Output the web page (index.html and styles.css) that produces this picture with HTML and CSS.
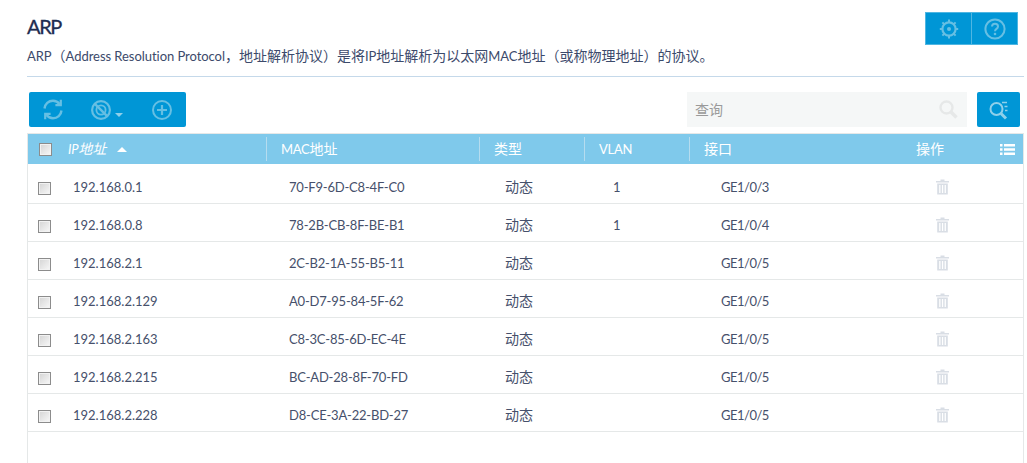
FILE: index.html
```html
<!DOCTYPE html>
<html lang="zh">
<head>
<meta charset="utf-8">
<title>ARP</title>
<link rel="stylesheet" href="styles.css">
</head>
<body>
<div class="page">
  <header class="head">
    <div class="head-text">
      <h1 class="title">ARP</h1>
      <p class="desc"><span class="en">ARP</span>（<span class="en">Address Resolution Protocol</span>，地址解析协议）是将<span class="en">IP</span>地址解析为以太网<span class="en">MAC</span>地址（或称物理地址）的协议。</p>
    </div>
    <div class="head-btns">
      <button class="hbtn" aria-label="设置">
        <svg class="ic" width="20" height="20" viewBox="0 0 20 20" fill="none" stroke="#66bfe3" stroke-width="2.200"><circle cx="10" cy="10" r="6.600"/><circle cx="10" cy="10" r="2" fill="#66bfe3" stroke="none"/><path d="M10 .5v2.600M10 16.900v2.600M.8 10h2.600M16.600 10h2.600M3.400 3.400l1.800 1.800M14.800 14.800l1.800 1.800M16.600 3.400l-1.800 1.800M5.200 14.800l-1.800 1.800" stroke-width="2"/></svg>
      </button>
      <button class="hbtn" aria-label="帮助">
        <svg class="ic" width="22" height="22" viewBox="0 0 22 22" fill="none" stroke="#66bfe3" stroke-width="2"><circle cx="11" cy="11" r="9.600"/><path d="M8 8.600c0-1.800 1.400-2.900 3-2.900s3 1 3 2.700c0 2.500-3 2.400-3 4.800"/><circle cx="11" cy="16" r="1.300" fill="#66bfe3" stroke="none"/></svg>
      </button>
    </div>
  </header>
  <div class="toolbar">
    <div class="actions">
      <svg class="ic" width="20" height="21" viewBox="0 0 20 21" fill="none" stroke="#66bfe3" stroke-width="2.400"><path d="M1.500 9.500C2 5 5.500 1.800 10 1.800c2.800 0 5 1.200 6.500 3.200M18.500 11.500c-.5 4.500-4 7.700-8.500 7.700-2.800 0-5-1.200-6.500-3.200"/><path d="M17.800 .8v5.400h-5.400M2.200 20.200v-5.400h5.400" stroke-width="2.200"/></svg>
      <span class="act-mid">
        <svg class="ic" width="20" height="20" viewBox="0 0 20 20" fill="none" stroke="#66bfe3" stroke-width="2.200"><circle cx="10" cy="10" r="8.900"/><circle cx="10" cy="10" r="4.600" stroke-width="1.800"/><path d="M3.600 3.600l12.800 12.800" stroke-width="2.400"/></svg>
        <i class="caret"></i>
      </span>
      <svg class="ic" width="20" height="20" viewBox="0 0 20 20" fill="none" stroke="#66bfe3" stroke-width="2"><circle cx="10" cy="10" r="9"/><path d="M10 5v10M5 10h10" stroke-width="2.200"/></svg>
    </div>
    <div class="search">
      <div class="search-box">
        <span class="ph">查询</span>
        <svg class="ic" width="19" height="19" viewBox="0 0 19 19" fill="none" stroke="#e6e8e8" stroke-width="2.400"><circle cx="7.500" cy="7.500" r="6"/><path d="M12 12l5.500 5.500" stroke-width="3.400"/></svg>
      </div>
      <button class="adv" aria-label="高级查询">
        <svg class="ic" width="20" height="20" viewBox="0 0 20 20" fill="none" stroke="#8fd0ea" stroke-width="2"><circle cx="7.500" cy="9" r="6"/><path d="M12 13.500l5 5" stroke-width="3"/><path d="M13 2.500h5M15.500 6.500h3M16 10.500h2.500" stroke-width="1.600"/></svg>
      </button>
    </div>
  </div>
  <section class="table">
    <div class="thead grid">
      <span class="cell-chk"><i class="chk"></i></span>
      <span class="th first"><span class="en">IP</span>地址<i class="sort"></i></span>
      <span class="th"><span class="en">MAC</span>地址</span>
      <span class="th">类型</span>
      <span class="th"><span class="en">VLAN</span></span>
      <span class="th">接口</span>
      <span class="th-op">操作</span>
      <span class="th-list">
        <svg width="15" height="11" viewBox="0 0 15 11" fill="#fff"><path d="M0 0h2.500v2.400H0zM4 0h11v2.400H4zM0 4.300h2.500v2.400H0zM4 4.300h11v2.400H4zM0 8.600h2.500V11H0zM4 8.600h11V11H4z"/></svg>
      </span>
    </div>
    <div class="tbody">
      <div class="row grid"><span class="cell-chk"><i class="chk"></i></span><span class="td">192.168.0.1</span><span class="td">70-F9-6D-C8-4F-C0</span><span class="td">动态</span><span class="td">1</span><span class="td">GE1/0/3</span><span class="op"><svg class="trash" width="13" height="16" viewBox="0 0 13 15"><use href="#t"/></svg></span></div>
      <div class="row grid"><span class="cell-chk"><i class="chk"></i></span><span class="td">192.168.0.8</span><span class="td">78-2B-CB-8F-BE-B1</span><span class="td">动态</span><span class="td">1</span><span class="td">GE1/0/4</span><span class="op"><svg class="trash" width="13" height="16" viewBox="0 0 13 15"><use href="#t"/></svg></span></div>
      <div class="row grid"><span class="cell-chk"><i class="chk"></i></span><span class="td">192.168.2.1</span><span class="td">2C-B2-1A-55-B5-11</span><span class="td">动态</span><span class="td"></span><span class="td">GE1/0/5</span><span class="op"><svg class="trash" width="13" height="16" viewBox="0 0 13 15"><use href="#t"/></svg></span></div>
      <div class="row grid"><span class="cell-chk"><i class="chk"></i></span><span class="td">192.168.2.129</span><span class="td">A0-D7-95-84-5F-62</span><span class="td">动态</span><span class="td"></span><span class="td">GE1/0/5</span><span class="op"><svg class="trash" width="13" height="16" viewBox="0 0 13 15"><use href="#t"/></svg></span></div>
      <div class="row grid"><span class="cell-chk"><i class="chk"></i></span><span class="td">192.168.2.163</span><span class="td">C8-3C-85-6D-EC-4E</span><span class="td">动态</span><span class="td"></span><span class="td">GE1/0/5</span><span class="op"><svg class="trash" width="13" height="16" viewBox="0 0 13 15"><use href="#t"/></svg></span></div>
      <div class="row grid"><span class="cell-chk"><i class="chk"></i></span><span class="td">192.168.2.215</span><span class="td">BC-AD-28-8F-70-FD</span><span class="td">动态</span><span class="td"></span><span class="td">GE1/0/5</span><span class="op"><svg class="trash" width="13" height="16" viewBox="0 0 13 15"><use href="#t"/></svg></span></div>
      <div class="row grid"><span class="cell-chk"><i class="chk"></i></span><span class="td">192.168.2.228</span><span class="td">D8-CE-3A-22-BD-27</span><span class="td">动态</span><span class="td"></span><span class="td">GE1/0/5</span><span class="op"><svg class="trash" width="13" height="16" viewBox="0 0 13 15"><use href="#t"/></svg></span></div>
    </div>
  </section>
</div>
<svg class="defs" width="0" height="0"><defs><g id="t" fill="#d9dee5"><path d="M4.500 0h4v1.400H13v1.600H0V1.400h4.500z"/><path d="M1.200 4h10.600v11H1.200zM3.200 5.500v8h1.300v-8zM5.900 5.500v8h1.300v-8zM8.600 5.500v8h1.300v-8z" fill-rule="evenodd"/></g></defs></svg>
</body>
</html>
```
FILE: styles.css
```css
* { box-sizing: border-box; }
html, body { margin: 0; height: 100%; overflow: hidden; background: #fff; }
body { font-family: "Lato", "Noto Sans CJK SC", sans-serif; color: #46506b; font-size: 13px; }
.page { padding: 14px 3px 0 27px; height: 463px; overflow: hidden; }
.ic { display: block; flex: none; }
.head { display: flex; justify-content: space-between; align-items: flex-start; height: 63px; border-bottom: 1px solid #c5d9ea; }
.title { margin: 0; font-size: 20px; line-height: 24px; font-weight: 400; letter-spacing: -1.4px; color: #1e2d52; -webkit-text-stroke: 0.3px #1e2d52; }
.desc { margin: 8px 0 0; font-size: 14px; line-height: 20px; color: #3c4a6b; }
.en { font-size: 13px; letter-spacing: -0.05px; }
.head-btns { display: flex; margin: -2px 6px 0 0; }
.hbtn { width: 47px; height: 33px; padding: 0; display: flex; align-items: center; justify-content: center; background: #0096d6; border: 1px solid #4fb6e2; margin-left: -1px; }
.toolbar { display: flex; justify-content: space-between; align-items: flex-start; padding: 15px 4px 0 2px; height: 56px; }
.actions { width: 157px; height: 35px; background: #0096d6; border-radius: 2px; display: flex; align-items: center; padding: 0 14px; gap: 28px; }
.act-mid { display: flex; align-items: center; position: relative; width: 33px; gap: 4px; }
.caret { width: 0; height: 0; margin-top: 10px; border: 4px solid transparent; border-top: 4px solid #8fcfe9; border-bottom: 0; }
.search { display: flex; gap: 10px; }
.search-box { width: 280px; height: 35px; background: #f5f7f7; display: flex; align-items: center; justify-content: space-between; padding: 0 9px 0 8px; }
.ph { color: #9a9a9a; font-size: 14px; margin-top: -2px; }
.adv { width: 43px; height: 35px; padding: 0; border: 0; background: #0096d6; border-radius: 2px; display: flex; align-items: center; justify-content: center; }
.table { border-left: 1px solid #e5e8e8; border-right: 1px solid #e5e8e8; border-top: 1px solid #e5e8e8; height: 330px; }
.grid { display: grid; grid-template-columns: 40px 198px 213px 105px 105px 247px 1fr; }
.thead { height: 30px; background: #7fc9eb; color: #fff; align-items: center; grid-template-columns: 40px 198px 213px 105px 105px 227px 84px 1fr; font-size: 14px; }
.tbody { padding-top: 2px; }
.cell-chk { display: flex; padding-left: 11px; align-items: center; }
.chk { display: block; width: 13px; height: 13px; border: 1px solid #8c8c8c; background: linear-gradient(135deg, #d4d4d4, #f8f8f8); box-shadow: inset 0 0 0 1px #f2f2f2; }
.th { height: 24px; line-height: 24px; padding-left: 14px; border-left: 1px solid #b5dcef; white-space: nowrap; }
.th .en { letter-spacing: -0.3px; }
.first { border-left: 0; padding-left: 0; font-style: italic; }
.sort { display: inline-block; width: 0; height: 0; margin: 0 0 2px 11px; border: 5px solid transparent; border-bottom: 5px solid #fff; border-top: 0; }
.th-op { line-height: 24px; }
.th-list { display: flex; }
.row { height: 38px; align-items: center; border-bottom: 1px solid #e5e8e8; }
.row .cell-chk { padding-left: 10px; padding-top: 8px; }
.td { padding-left: 5px; white-space: nowrap; padding-top: 5px; }
.td:nth-child(3) { padding-left: 23px; letter-spacing: -0.2px; }
.td:nth-child(4) { padding-left: 26px; font-size: 14px; padding-top: 3px; }
.td:nth-child(5) { padding-left: 29px; }
.td:nth-child(6) { padding-left: 32px; letter-spacing: -0.5px; }
.op { display: flex; padding-top: 4px; }
.defs { position: absolute; }
```
